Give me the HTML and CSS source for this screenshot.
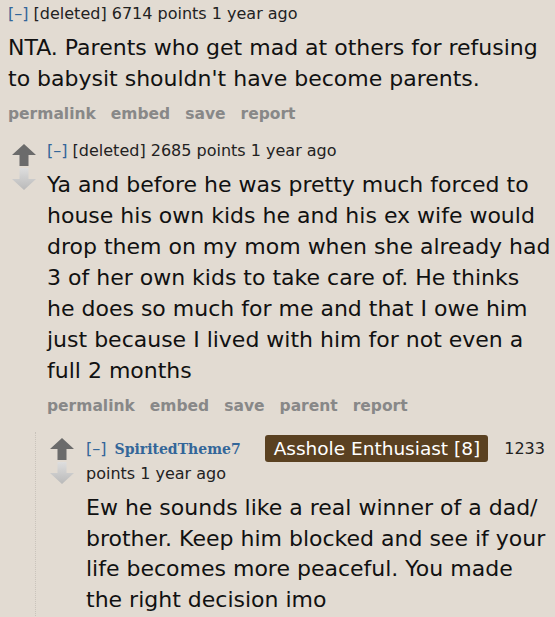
FILE: index.html
```html
<!DOCTYPE html>
<html>
<head>
<meta charset="utf-8">
<link rel="stylesheet" href="styles.css">
</head>
<body>
<div class="thread">
  <div class="comment top">
    <div class="entry">
      <div class="tagline"><span class="expand">[–]</span> <span>[deleted]</span> <span>6714 points</span> <span>1 year ago</span></div>
      <div class="md">NTA. Parents who get mad at others for refusing to babysit shouldn't have become parents.</div>
      <ul class="buttons"><li>permalink</li><li>embed</li><li>save</li><li>report</li></ul>
    </div>
  </div>

  <div class="comment reply">
    <div class="votes">
      <svg class="arrow" width="24" height="24" viewBox="0 0 24 24"><path d="M12 1 L24 12 L16.5 12 L16.5 23 L7.5 23 L7.5 12 L0 12 Z" fill="#6b6b6b"/></svg>
      <svg class="arrow" width="24" height="24" viewBox="0 0 24 24"><defs><linearGradient id="dg" x1="0" y1="0" x2="0" y2="1"><stop offset="0" stop-color="#dedede"/><stop offset="1" stop-color="#b9b9b9"/></linearGradient></defs><path d="M12 23 L24 12 L16.5 12 L16.5 1 L7.5 1 L7.5 12 L0 12 Z" fill="url(#dg)"/></svg>
    </div>
    <div class="entry">
      <div class="tagline"><span class="expand">[–]</span> <span>[deleted]</span> <span>2685 points</span> <span>1 year ago</span></div>
      <div class="md">Ya and before he was pretty much forced to house his own kids he and his ex wife would drop them on my mom when she already had 3 of her own kids to take care of. He thinks he does so much for me and that I owe him just because I lived with him for not even a full 2 months</div>
      <ul class="buttons"><li>permalink</li><li>embed</li><li>save</li><li>parent</li><li>report</li></ul>
    </div>
  </div>

  <div class="child">
    <div class="comment nested">
      <div class="votes">
        <svg class="arrow" width="24" height="24" viewBox="0 0 24 24"><path d="M12 1 L24 12 L16.5 12 L16.5 23 L7.5 23 L7.5 12 L0 12 Z" fill="#6b6b6b"/></svg>
        <svg class="arrow" width="24" height="24" viewBox="0 0 24 24"><defs><linearGradient id="dg2" x1="0" y1="0" x2="0" y2="1"><stop offset="0" stop-color="#dedede"/><stop offset="1" stop-color="#b9b9b9"/></linearGradient></defs><path d="M12 23 L24 12 L16.5 12 L16.5 1 L7.5 1 L7.5 12 L0 12 Z" fill="url(#dg2)"/></svg>
      </div>
      <div class="entry">
        <div class="tagline tag-nested"><span class="expand">[–]</span> <span class="author">SpiritedTheme7</span><span class="flair">Asshole Enthusiast [8]</span><span class="score">1233</span> points 1 year ago</div>
        <div class="md md-nested">Ew he sounds like a real winner of a dad/ brother. Keep him blocked and see if your life becomes more peaceful. You made the right decision imo</div>
      </div>
    </div>
  </div>
</div>
</body>
</html>
```

FILE: styles.css
```css
html, body {
  margin: 0;
  padding: 0;
  background: #e2dbd2;
}
body {
  font-family: "DejaVu Sans", Verdana, sans-serif;
  color: #111;
  overflow: hidden;
}
.thread {
  padding: 0 3px 0 8px;
}
.comment {
  display: flex;
  align-items: flex-start;
}
.entry {
  flex: 1;
  min-width: 0;
}
.votes {
  display: flex;
  flex-direction: column;
  align-items: center;
  width: 28px;
  flex: none;
}
.arrow {
  display: block;
}
.tagline {
  font-size: 16px;
  line-height: 20px;
  color: #222;
  white-space: nowrap;
}
.expand {
  color: #369;
}
.md {
  font-size: 22px;
  line-height: 31px;
  margin-top: 8px;
  color: #111;
}
.buttons {
  list-style: none;
  margin: 9px 0 0 0;
  padding: 0;
  display: flex;
  gap: 15px;
  font-family: "DejaVu Sans", Verdana, sans-serif;
  font-weight: bold;
  font-size: 15.5px;
  line-height: 22px;
  color: #888;
}
.top .entry {
  padding-top: 4px;
}
.reply {
  margin-top: 18px;
}
.reply .votes {
  margin-left: 2px;
  margin-right: 9px;
}
.reply .entry {
  margin-top: -2px;
}
.child {
  margin: 15px 0 0 27px;
  border-left: 1px dotted #c9c3bb;
  padding: 5px 0 0 12px;
}
.nested .votes {
  margin-right: 10px;
}
.tag-nested {
  white-space: normal;
  line-height: 24px;
}
.tag-nested .expand {
  margin-right: 3px;
}
.author {
  color: #369;
  font-weight: bold;
  font-family: "DejaVu Serif", Georgia, serif;
  font-size: 14px;
}
.flair {
  display: inline-block;
  vertical-align: top;
  background: #5a4121;
  color: #fff;
  font-size: 18.5px;
  line-height: 27px;
  padding: 0 8px 0 9px;
  border-radius: 3px;
  margin: -2px 16px 0 24px;
}
.score {
  color: #222;
}
.md-nested {
  margin-top: 7px;
  line-height: 30.7px;
}
```
